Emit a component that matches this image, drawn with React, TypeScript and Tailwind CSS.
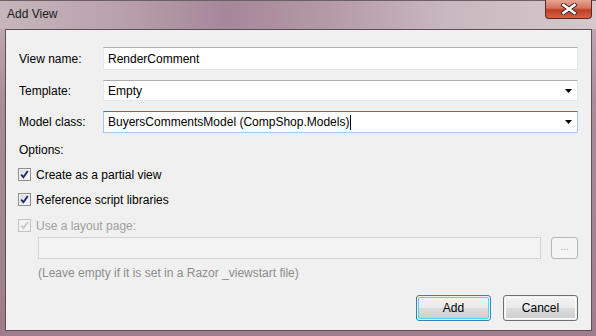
import React from "react";

function CheckBox({ disabled }: { disabled?: boolean }) {
    return (
        <div
            className={`w-[13px] h-[13px] border p-px shrink-0 ${disabled ? "border-[#c4c4c4]" : "border-[#8e8f8f]"}`}
        >
            <div
                className={`w-full h-full relative ${disabled ? "bg-[#f4f4f4]" : "bg-linear-to-br from-[#dadada] to-[#fcfcfc]"}`}
            >
                <svg viewBox="0 0 9 9" className="absolute inset-0 w-[9px] h-[9px]">
                    <path
                        d="M1.2 4.6 L3.4 7.2 L7.8 1"
                        fill="none"
                        stroke={disabled ? "#c8c8c8" : "#202a74"}
                        strokeWidth="1.9"
                    />
                </svg>
            </div>
        </div>
    );
}

function DropArrow() {
    return (
        <svg viewBox="0 0 7 4" className="w-[7px] h-[4px] shrink-0">
            <path d="M0 0 H7 L3.5 4 Z" fill="#000" />
        </svg>
    );
}

function FieldRow({
    label,
    value,
    combo,
    focused,
    heightClass,
}: {
    label: string;
    value: string;
    combo?: boolean;
    focused?: boolean;
    heightClass: string;
}) {
    return (
        <div className="flex items-center">
            <div className="w-[84px] text-[12px] text-black">{label}</div>
            <div
                className={`w-[475px] ${heightClass} flex items-center bg-white border pl-[4px] pr-[5px] ${
                    focused
                        ? "border-[#a7c8e2] border-t-[#3d7bad]"
                        : "border-[#e2e8ee] border-t-[#abadb3]"
                }`}
            >
                <span className="text-[12px] text-black leading-none">{value}</span>
                {focused && <span className="w-px h-[15px] bg-black ml-px" />}
                <div className="flex-1" />
                {combo && <DropArrow />}
            </div>
        </div>
    );
}

export default function App() {
    return (
        <div className="w-[596px] h-[336px] flex flex-col font-['Segoe_UI','Liberation_Sans',Arial,sans-serif] bg-[linear-gradient(180deg,#c4b2b9_0%,#a98c99_30%,#9f7c8b_100%)] overflow-hidden">
            {/* Title bar */}
            <div className="h-[29px] flex items-start justify-between pr-[4px] bg-[linear-gradient(90deg,#c6b6bc_0%,#b9a1ab_20%,#a5879a_38%,#b49aa6_55%,#c9b8bf_75%,#d4c8cc_100%)] border-t border-[#6e5e66]">
                <div className="pl-[7px] pt-[6px] text-[12px] leading-[14px] text-[#1a1a1a]">Add View</div>
                <div className="w-[47px] h-[19px] -mt-px rounded-b-[4px] border border-[#5a2a24] border-t-0 bg-[linear-gradient(180deg,#e7a694_0%,#d4705c_45%,#c13d24_55%,#d4614a_100%)] flex items-center justify-center">
                    <svg viewBox="0 0 18 12" className="w-[18px] h-[12px]">
                        <path d="M3.5 2 L14.5 10 M14.5 2 L3.5 10" stroke="#3a2a2a" strokeWidth="4.4" strokeLinecap="square" />
                        <path d="M3.5 2 L14.5 10 M14.5 2 L3.5 10" stroke="#ffffff" strokeWidth="2.6" strokeLinecap="square" />
                    </svg>
                </div>
            </div>

            {/* Client area */}
            <div className="ml-[5px] w-[587px] h-[302px] border border-[#5d4f55] bg-[#f0f0f0] flex flex-col pl-[13px] pr-[13px] pt-[17px]">
                <div className="flex flex-col gap-[10px]">
                    <FieldRow label="View name:" value="RenderComment" heightClass="h-[23px]" />
                    <FieldRow label="Template:" value="Empty" combo heightClass="h-[21px]" />
                    <FieldRow label="Model class:" value="BuyersCommentsModel (CompShop.Models)" combo focused heightClass="h-[22px]" />
                </div>

                <div className="mt-[8px] h-[18px] flex items-center text-[12px] text-black">Options:</div>

                <div className="mt-[9px] flex items-center gap-[5px] text-[12px] text-black h-[13px] -ml-px">
                    <CheckBox />
                    <span>Create as a partial view</span>
                </div>
                <div className="mt-[12px] flex items-center gap-[5px] text-[12px] text-black h-[13px] -ml-px">
                    <CheckBox />
                    <span>Reference script libraries</span>
                </div>
                <div className="mt-[13px] flex items-center gap-[5px] text-[12px] text-[#a0a0a0] h-[13px] -ml-px">
                    <CheckBox disabled />
                    <span>Use a layout page:</span>
                </div>

                <div className="mt-[5px] pl-[19px] flex items-center gap-[10px]">
                    <div className="w-[503px] h-[22px] bg-[#f3f3f3] border border-[#d3d3d3]" />
                    <div className="w-[27px] h-[22px] rounded-[3px] border border-[#b4b6b8] bg-[#f4f4f4] flex items-center justify-center text-[10px] text-[#a8a8a8] leading-none pb-[2px]">
                        ...
                    </div>
                </div>

                <div className="mt-[6px] pl-[19px] h-[16px] flex items-center text-[12px] text-[#8d8d8d]">
                    (Leave empty if it is set in a Razor _viewstart file)
                </div>

                <div className="mt-[14px] flex justify-end gap-[12px]">
                    <div className="w-[75px] h-[26px] rounded-[3px] border border-[#3c7fb1] p-px">
                        <div className="w-full h-full rounded-[2px] border border-[#48d8fd] bg-[linear-gradient(180deg,#f2f2f2_0%,#ebebeb_48%,#dddddd_52%,#cfcfcf_100%)] flex items-center justify-center text-[12px] text-black">
                            Add
                        </div>
                    </div>
                    <div className="w-[75px] h-[26px] rounded-[3px] border border-[#707070] p-px">
                        <div className="w-full h-full rounded-[2px] border border-[#fbfbfb] bg-[linear-gradient(180deg,#f2f2f2_0%,#ebebeb_48%,#dddddd_52%,#cfcfcf_100%)] flex items-center justify-center text-[12px] text-black">
                            Cancel
                        </div>
                    </div>
                </div>
            </div>
        </div>
    );
}
